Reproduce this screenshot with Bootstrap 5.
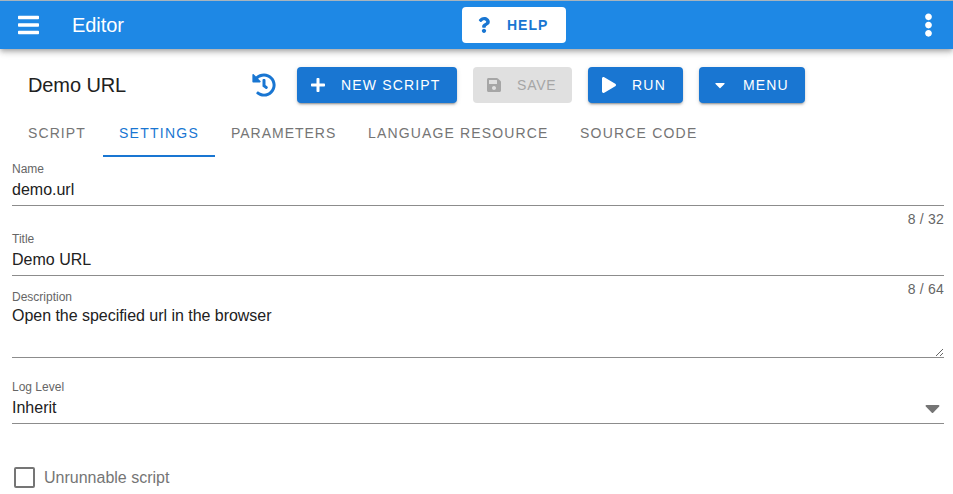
<!DOCTYPE html>
<html lang="en">
<head>
<meta charset="utf-8">
<meta name="viewport" content="width=device-width, initial-scale=1">
<title>Editor</title>
<link rel="stylesheet" href="https://cdn.jsdelivr.net/npm/bootstrap@5.3.0/dist/css/bootstrap.min.css">
<style>
body{font-family:"Liberation Sans",Arial,sans-serif;color:#212121;background:#fff;overflow:hidden;height:494px}
svg{fill:currentColor;flex:none;display:block}
.appbar{height:49px;border-top:1px solid #a8b4bd;background:#1e88e5;box-shadow:0 2px 4px -1px rgba(0,0,0,.2),0 4px 5px rgba(0,0,0,.14),0 1px 10px rgba(0,0,0,.12);padding:0 20px 0 18px}
.start-side{width:444px}
.brand{font-size:20px;margin-left:33px;letter-spacing:-.05px}
.act{height:36px;padding:0 0 0 13px;gap:15px;border:0;border-radius:4px;font-size:14px;letter-spacing:1.15px;line-height:1;white-space:nowrap;background:#1976d2;color:#fff;box-shadow:0 3px 1px -2px rgba(0,0,0,.2),0 2px 2px rgba(0,0,0,.14),0 1px 5px rgba(0,0,0,.12)}
.act:hover{background:#1976d2;color:#fff}
.act:disabled{background:#e0e0e0;color:#a6a6a6;opacity:1;box-shadow:none}
.help-btn,.help-btn:hover{width:104px;padding-left:14px;background:#fff;color:#1976d2;font-weight:700;letter-spacing:1px;box-shadow:none}
.w-new{width:160px}.w-save{width:99px;letter-spacing:.8px}.w-run{width:95px;letter-spacing:1.25px}.w-menu{width:106px}
.toolbar{height:72px;padding-left:28px}
.script-title{font-size:20px;width:224px;letter-spacing:-.1px}
.history{color:#1976d2;margin-right:21px}
.tabs{height:36px;padding-left:12px}
.tabs .nav-link{height:36px;padding:3px 0 0 16px;font-size:14px;letter-spacing:1.2px;line-height:18px;color:#757575;border-radius:0;border-bottom:2px solid transparent;white-space:nowrap}
.tabs .nav-link.active{color:#1976d2;border-bottom-color:#1976d2}
.tabs .t-script{width:91px;letter-spacing:1.1px}
.tabs .t-settings{width:112px;letter-spacing:1.25px}
.tabs .t-params{width:137px;letter-spacing:.98px}
.tabs .t-lang{width:212px;letter-spacing:1.15px}
.tabs .t-source{width:149px}
.fields{padding:0 9px 0 12px}
.field label{font-size:12px;line-height:14px;color:#666;display:block}
.field .form-control{border:0;border-bottom:1px solid #8c8c8c;border-radius:0;padding:0;font-size:16px;line-height:20px;color:#212121;box-shadow:none;background:transparent}
.limited{padding-top:5px}
.field input.form-control{height:30px;padding-bottom:2px}
.described{margin-top:-7px}
.field textarea.form-control{height:52px;min-height:0;margin-top:2px;resize:vertical;overflow:hidden;letter-spacing:-.03px}
.counter{font-size:14px;line-height:16px;padding-top:5px;letter-spacing:.2px;color:#666;text-align:right}
.level{padding-top:22px}
.picker{height:30px;border-bottom:1px solid #8c8c8c;line-height:20px;padding-bottom:2px}
.box{width:21px;height:21px;border:2px solid #757575;border-radius:2px}
.check-row{color:#757575;gap:9px;padding-left:2px;margin-top:43px;line-height:21px}
</style>
<script src="https://cdn.jsdelivr.net/npm/bootstrap@5.3.0/dist/js/bootstrap.bundle.min.js"></script>
</head>
<body>
<header class="appbar d-flex align-items-center text-white">
  <div class="start-side d-flex align-items-center">
    <svg width="21" height="24" viewBox="0 0 448 512"><path d="M16 132h416c8.837 0 16-7.163 16-16V76c0-8.837-7.163-16-16-16H16C7.163 60 0 67.163 0 76v40c0 8.837 7.163 16 16 16zm0 160h416c8.837 0 16-7.163 16-16v-40c0-8.837-7.163-16-16-16H16c-8.837 0-16 7.163-16 16v40c0 8.837 7.163 16 16 16zm0 160h416c8.837 0 16-7.163 16-16v-40c0-8.837-7.163-16-16-16H16c-8.837 0-16 7.163-16 16v40c0 8.837 7.163 16 16 16z"/></svg>
    <span class="brand">Editor</span>
  </div>
  <button class="btn act help-btn d-flex align-items-center"><svg width="16" height="16" viewBox="-64 0 512 512"><path d="M202.021 0C122.202 0 70.503 32.703 29.914 91.026c-7.363 10.58-5.093 25.086 5.178 32.874l43.138 32.709c10.373 7.865 25.132 6.026 33.253-4.148 25.049-31.381 43.63-49.449 82.757-49.449 30.764 0 68.816 19.799 68.816 49.631 0 22.552-18.617 34.134-48.993 51.164-35.423 19.86-82.299 44.576-82.299 106.405V320c0 13.255 10.745 24 24 24h72.471c13.255 0 24-10.745 24-24v-5.773c0-42.86 125.268-44.645 125.268-160.627C377.504 66.256 286.902 0 202.021 0zM192 373.459c-38.196 0-69.271 31.075-69.271 69.271 0 38.195 31.075 69.27 69.271 69.27s69.271-31.075 69.271-69.271-31.075-69.27-69.271-69.27z"/></svg>HELP</button>
  <svg class="ms-auto" width="9" height="24" viewBox="0 0 192 512"><path d="M96 184c39.8 0 72 32.2 72 72s-32.2 72-72 72-72-32.2-72-72 32.2-72 72-72zM24 80c0 39.8 32.2 72 72 72s72-32.2 72-72S135.8 8 96 8 24 40.2 24 80zm0 352c0 39.8 32.2 72 72 72s72-32.2 72-72-32.2-72-72-72-72 32.2-72 72z"/></svg>
</header>
<main>
  <div class="toolbar d-flex align-items-center">
    <div class="script-title">Demo URL</div>
    <svg class="history" width="24" height="24" viewBox="0 0 512 512"><path d="M504 255.531c.253 136.64-111.18 248.372-247.82 248.468-59.015.042-113.223-20.53-155.822-54.911-11.077-8.94-11.905-25.541-1.839-35.607l11.267-11.267c8.609-8.609 22.353-9.551 31.891-1.984C173.062 425.135 212.781 440 256 440c101.705 0 184-82.311 184-184 0-101.705-82.311-184-184-184-48.814 0-93.149 18.969-126.068 49.932l50.754 50.754c10.08 10.08 2.941 27.314-11.313 27.314H24c-8.837 0-16-7.163-16-16V38.627c0-14.254 17.234-21.393 27.314-11.314l49.372 49.372C129.209 34.136 189.552 8 256 8c136.81 0 247.747 110.78 248 247.531zm-180.912 78.784l9.823-12.63c8.138-10.463 6.253-25.542-4.21-33.679L288 256.349V152c0-13.255-10.745-24-24-24h-16c-13.255 0-24 10.745-24 24v135.651l65.409 50.874c10.463 8.137 25.541 6.253 33.679-4.21z"/></svg>
    <div class="d-flex gap-3">
      <button class="btn act w-new d-flex align-items-center"><svg width="16" height="16" viewBox="-32 0 512 512"><path d="M416 208H272V64c0-17.67-14.33-32-32-32h-32c-17.67 0-32 14.33-32 32v144H32c-17.67 0-32 14.33-32 32v32c0 17.67 14.33 32 32 32h144v144c0 17.67 14.33 32 32 32h32c17.67 0 32-14.33 32-32V304h144c17.67 0 32-14.33 32-32v-32c0-17.67-14.33-32-32-32z"/></svg>NEW SCRIPT</button>
      <button class="btn act w-save d-flex align-items-center" disabled><svg width="16" height="16" viewBox="-32 0 512 512"><path d="M433.941 129.941l-83.882-83.882A48 48 0 0 0 316.118 32H48C21.49 32 0 53.49 0 80v352c0 26.51 21.49 48 48 48h352c26.51 0 48-21.49 48-48V163.882a48 48 0 0 0-14.059-33.941zM224 416c-35.346 0-64-28.654-64-64 0-35.346 28.654-64 64-64s64 28.654 64 64c0 35.346-28.654 64-64 64zm96-304.52V212c0 6.627-5.373 12-12 12H76c-6.627 0-12-5.373-12-12V108c0-6.627 5.373-12 12-12h228.52c3.183 0 6.235 1.264 8.485 3.515l3.48 3.48A11.996 11.996 0 0 1 320 111.48z"/></svg>SAVE</button>
      <button class="btn act w-run d-flex align-items-center"><svg width="16" height="16" viewBox="-32 0 512 512"><path d="M424.4 214.7L72.4 6.6C43.8-10.3 0 6.1 0 47.9V464c0 37.5 40.7 60.1 72.4 41.3l352-208c31.4-18.5 31.5-64.1 0-82.6z"/></svg>RUN</button>
      <button class="btn act w-menu d-flex align-items-center"><svg width="16" height="16" viewBox="-96 0 512 512"><path d="M31.3 192h257.3c17.8 0 26.7 21.5 14.1 34.1L174.1 354.8c-7.8 7.8-20.5 7.8-28.3 0L17.2 226.1C4.6 213.5 13.5 192 31.3 192z"/></svg>MENU</button>
    </div>
  </div>
  <nav class="tabs nav flex-nowrap">
    <a class="nav-link t-script" href="#">SCRIPT</a>
    <a class="nav-link t-settings active" href="#">SETTINGS</a>
    <a class="nav-link t-params" href="#">PARAMETERS</a>
    <a class="nav-link t-lang" href="#">LANGUAGE RESOURCE</a>
    <a class="nav-link t-source" href="#">SOURCE CODE</a>
  </nav>
  <form class="fields">
    <div class="field limited">
      <label for="fName">Name</label>
      <input id="fName" class="form-control" value="demo.url">
      <div class="counter">8 / 32</div>
    </div>
    <div class="field limited">
      <label for="fTitle">Title</label>
      <input id="fTitle" class="form-control" value="Demo URL">
      <div class="counter">8 / 64</div>
    </div>
    <div class="field described">
      <label for="fDesc">Description</label>
      <textarea id="fDesc" class="form-control">Open the specified url in the browser</textarea>
    </div>
    <div class="field level">
      <label>Log Level</label>
      <div class="picker d-flex align-items-center justify-content-between"><span>Inherit</span>
        <svg class="me-1" width="15" height="24" viewBox="0 0 320 512" color="#757575"><path d="M31.3 192h257.3c17.8 0 26.7 21.5 14.1 34.1L174.1 354.8c-7.8 7.8-20.5 7.8-28.3 0L17.2 226.1C4.6 213.5 13.5 192 31.3 192z"/></svg></div>
    </div>
    <div class="check-row d-flex align-items-center"><span class="box"></span><span>Unrunnable script</span></div>
  </form>
</main>
</body>
</html>
